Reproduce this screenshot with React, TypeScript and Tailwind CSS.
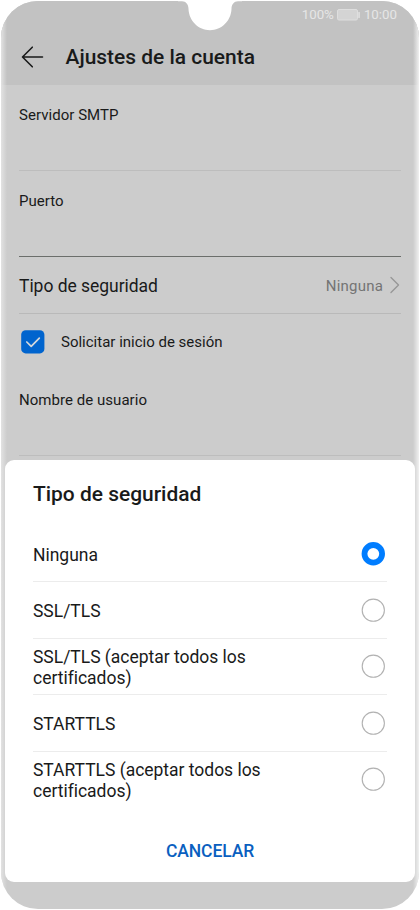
import { useState } from "react"

interface SecurityOption {
  id: string
  label: string
}

const SECURITY_OPTIONS: SecurityOption[] = [
  { id: "none", label: "Ninguna" },
  { id: "ssl", label: "SSL/TLS" },
  { id: "ssl-all", label: "SSL/TLS (aceptar todos los certificados)" },
  { id: "starttls", label: "STARTTLS" },
  { id: "starttls-all", label: "STARTTLS (aceptar todos los certificados)" },
]

export default function App() {
  const [selected, setSelected] = useState("none")

  return (
    <div className="h-[910px] w-[420px] bg-white p-px font-['Roboto',sans-serif] text-[#191a1a]">
      <div className="relative h-[908px] overflow-hidden rounded-[37px] bg-[#cccccc]">
        <Header />
        <main className="px-[18px]">
          <Field label="Servidor SMTP" />
          <Field label="Puerto" focused />
          <div className="flex h-[57px] items-center border-b border-[#b9b9b9] pt-[2px]">
            <span className="flex-1 text-[17.5px] tracking-[-0.04px]">Tipo de seguridad</span>
            <span className="mr-[7px] text-[15px] tracking-[0.2px] text-[#747474]">Ninguna</span>
            <span className="relative -top-px">
              <ChevronIcon />
            </span>
          </div>
          <label className="flex h-[55px] items-center pl-[2px] text-[15px]">
            <CheckboxIcon />
            <span className="ml-4 pt-px">Solicitar inicio de sesión</span>
          </label>
          <div className="pt-px">
            <Field label="Nombre de usuario" />
          </div>
        </main>

        {/* curved glass edges */}
        <div className="absolute inset-y-0 left-0 w-[6px] bg-linear-to-r from-[#e2e2e2] to-transparent" />
        <div className="absolute inset-y-0 right-0 w-[6px] bg-linear-to-l from-[#f0f0f0] to-transparent" />

        <SecurityDialog selected={selected} onSelect={setSelected} />
        <Notch />
      </div>
    </div>
  )
}

function Header() {
  return (
    <header className="h-[84px] bg-[#c2c2c2]">
      <div className="flex h-7 items-center justify-end pr-[22px] text-[13.3px] text-[#e6e6e6]">
        <span>100%</span>
        <BatteryIcon />
        <span>10:00</span>
      </div>
      <div className="flex h-14 items-center pl-5">
        <button type="button" aria-label="Atrás">
          <BackIcon />
        </button>
        <h1 className="ml-[21.5px] pt-[2px] text-[20.95px] font-medium">Ajustes de la cuenta</h1>
      </div>
    </header>
  )
}

function Field({ label, focused = false }: { label: string; focused?: boolean }) {
  return (
    <div
      className={`h-[86px] border-b pt-[19px] text-[15px] leading-[22px] tracking-[0.04px] ${
        focused ? "border-[#6b6e6b]" : "border-[#bdbdbd]"
      }`}
    >
      {label}
    </div>
  )
}

interface SecurityDialogProps {
  selected: string
  onSelect: (id: string) => void
}

function SecurityDialog({ selected, onSelect }: SecurityDialogProps) {
  return (
    <div
      role="dialog"
      aria-label="Tipo de seguridad"
      className="absolute inset-x-[4px] top-[459px] h-[422px] rounded-[9px] bg-white pr-7 pl-7"
    >
      <h2 className="h-[66px] pt-[19px] text-[20.95px] leading-[30px] font-medium">
        Tipo de seguridad
      </h2>
      <ul>
        {SECURITY_OPTIONS.map((option) => (
          <li key={option.id} className="h-[56.4px] border-b border-[#ececec] last:border-transparent">
            <button
              type="button"
              onClick={() => onSelect(option.id)}
              className="flex h-full w-full items-center justify-between pr-[2px] text-left text-[17.5px] leading-[21px] tracking-[-0.02px]"
            >
              <span className="w-[250px] pt-[3px]">{option.label}</span>
              <Radio checked={option.id === selected} />
            </button>
          </li>
        ))}
      </ul>
      <button
        type="button"
        className="mt-[27px] block h-8 w-full text-center text-[17.5px] tracking-[-0.1px] font-medium text-[#0a5fc0]"
      >
        CANCELAR
      </button>
    </div>
  )
}

function Radio({ checked }: { checked: boolean }) {
  return (
    <svg width="24" height="24" viewBox="0 0 24 24" fill="none">
      {checked ? (
        <circle cx="12.3" cy="11.800" r="8.8" stroke="#007dff" strokeWidth="5.8" />
      ) : (
        <circle cx="12.3" cy="12.200" r="11.1" stroke="#b2b2b2" strokeWidth="1.1" />
      )}
    </svg>
  )
}

function Notch() {
  return (
    <svg className="absolute top-0 left-[177px]" width="64" height="30" viewBox="0 0 64 30" fill="#fff">
      <path d="M0 0H64V0.300H60C56 0.300 53.600 3.500 53.500 8C53 20 43.500 29.200 32 29.200C20.500 29.200 11 20 10.500 8C10.400 3.500 8 0.300 4 0.300H0Z" />
    </svg>
  )
}

function BatteryIcon() {
  return (
    <svg className="mr-1 ml-[3px]" width="23" height="12" viewBox="0 0 23 12">
      <rect x="0.500" y="0.500" width="20" height="10.500" rx="1.500" fill="#d4d4d4" stroke="#dedede" />
      <rect x="21.300" y="3" width="1.500" height="6" rx="0.500" fill="#e2e2e2" />
    </svg>
  )
}

function BackIcon() {
  return (
    <svg width="23" height="22" viewBox="0 0 23 22" fill="none" stroke="#191a1a" strokeWidth="1.600" strokeLinecap="round" strokeLinejoin="round">
      <path d="M21.500 11H1.800M11.300 1.200L1.500 11L11.300 20.800" />
    </svg>
  )
}

function ChevronIcon() {
  return (
    <svg width="11" height="18" viewBox="0 0 11 18" fill="none" stroke="#979797" strokeWidth="1.400" strokeLinecap="round" strokeLinejoin="round">
      <path d="M1 1.500L8.500 9L1 16.500" />
    </svg>
  )
}

function CheckboxIcon() {
  return (
    <svg width="24" height="24" viewBox="0 0 24 24" fill="none">
      <rect x="0.200" y="0.200" width="23.200" height="23.200" rx="4.500" fill="#0064ce" />
      <path d="M5.800 12L10.200 16.300L18.300 8.200" stroke="#d4d8dc" strokeWidth="1.700" strokeLinecap="round" strokeLinejoin="round" />
    </svg>
  )
}
